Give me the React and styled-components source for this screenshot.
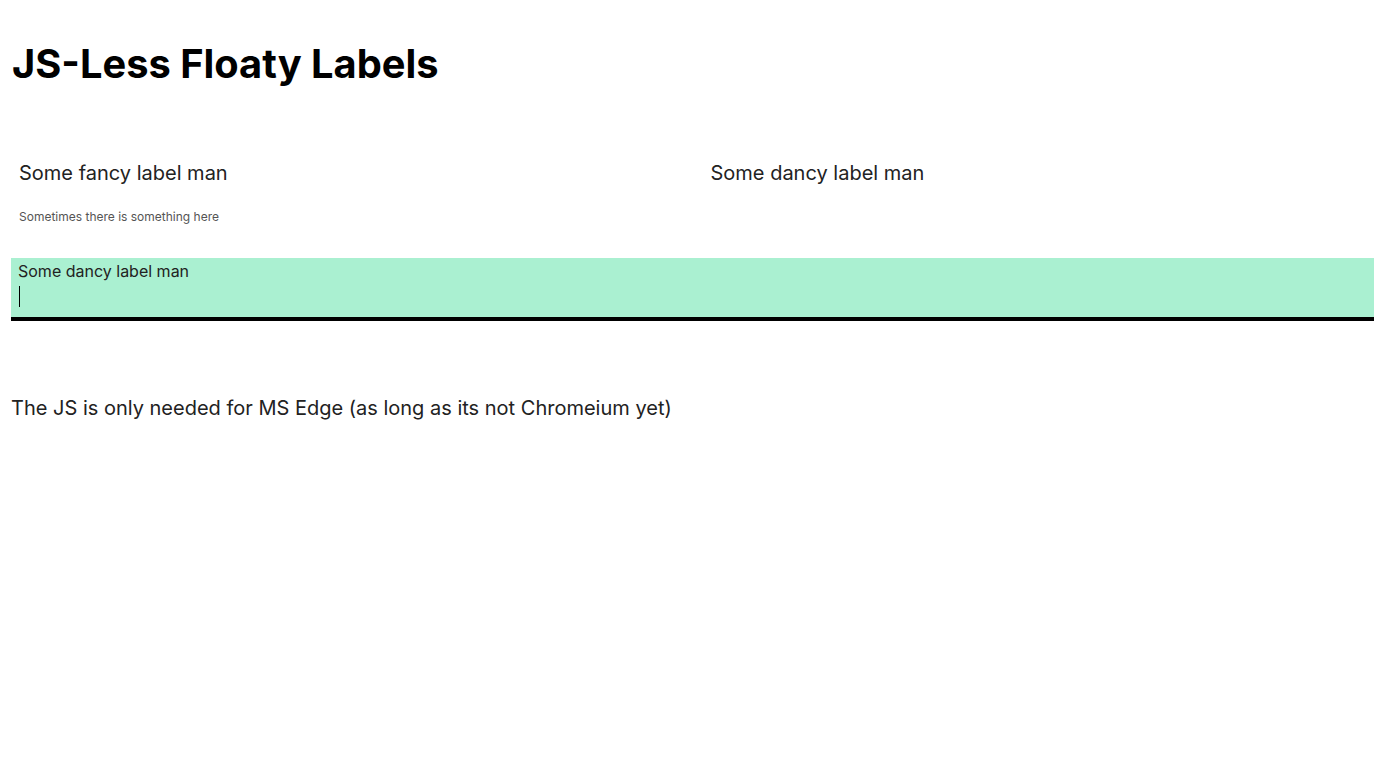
import React from "react";
import styled, { createGlobalStyle } from "styled-components";

const GlobalStyle = createGlobalStyle`
  body {
    margin: 0;
    background: #fff;
    font-family: Inter, "Noto Sans", sans-serif;
    color: #222;
  }
`;

export default function App() {
  return (
    <>
      <GlobalStyle />
      <Page>
        <Title>JS-Less Floaty Labels</Title>
        <Form>
          <Row>
            <div>
              <Field label="Some fancy label man" id="fancy" />
              <Helper>Sometimes there is something here</Helper>
            </div>
            <div>
              <Field label="Some dancy label man" id="dancy" />
            </div>
          </Row>
          <Field label="Some dancy label man" id="dancy2" active />
        </Form>
        <Note>The JS is only needed for MS Edge (as long as its not Chromeium yet)</Note>
      </Page>
    </>
  );
}

function Field({ label, id, active }) {
  return (
    <FieldBox $active={active}>
      <Input id={id} type="text" autoFocus={active} />
      <Label htmlFor={id} $active={active}>
        {label}
      </Label>
      {active && <Caret />}
    </FieldBox>
  );
}

const Page = styled.div`
  padding: 40px 16px 0 11px;
`;

const Title = styled.h1`
  margin: 0 0 0 1px;
  font-size: 39.8px;
  font-weight: 700;
  color: #000;
  line-height: 48px;
`;

const Form = styled.form`
  margin-top: 79px;
  display: flex;
  flex-direction: column;
  gap: 28px;
`;

const Row = styled.div`
  display: grid;
  grid-template-columns: 1fr 1fr;
  gap: 20px;
`;

const FieldBox = styled.div`
  position: relative;
  height: 59px;
  background: ${(p) => (p.$active ? "#aaf0d1" : "transparent")};
  border-bottom: 4px solid ${(p) => (p.$active ? "#000" : "transparent")};
`;

const Input = styled.input`
  position: absolute;
  left: 0;
  right: 0;
  bottom: 8px;
  height: 24px;
  padding: 0 8px;
  box-sizing: border-box;
  width: 100%;
  border: none;
  background: transparent;
  font-family: inherit;
  font-size: 20px;
  color: #222;
  caret-color: transparent;
  &:focus {
    outline: none;
  }
`;

const Label = styled.label`
  position: absolute;
  left: ${(p) => (p.$active ? "7px" : "8px")};
  top: ${(p) => (p.$active ? "4px" : "-6px")};
  font-size: ${(p) => (p.$active ? "16px" : "20px")};
  line-height: ${(p) => (p.$active ? "19px" : "24px")};
  color: #222;
  pointer-events: none;
`;

const Caret = styled.span`
  position: absolute;
  left: 8px;
  top: 28px;
  width: 1px;
  height: 21px;
  background: #000;
`;

const Helper = styled.div`
  padding: 0 8px;
  margin-top: -21px;
  font-size: 12px;
  line-height: 15px;
  color: #555;
`;

const Note = styled.p`
  margin: 75px 0 0 0;
  font-size: 20px;
  line-height: 24px;
  color: #222;
`;
